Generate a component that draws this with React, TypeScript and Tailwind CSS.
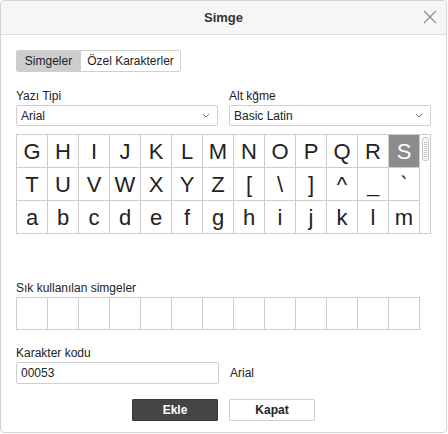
import React, { useState } from 'react';

const ROWS = [
  ['G', 'H', 'I', 'J', 'K', 'L', 'M', 'N', 'O', 'P', 'Q', 'R', 'S'],
  ['T', 'U', 'V', 'W', 'X', 'Y', 'Z', '[', '\\', ']', '^', '_', '`'],
  ['a', 'b', 'c', 'd', 'e', 'f', 'g', 'h', 'i', 'j', 'k', 'l', 'm'],
];

const Chevron = () => (
  <svg width="8" height="5" viewBox="0 0 8 5" className="text-[#777]">
    <path d="M1 1l3 3 3-3" fill="none" stroke="currentColor" strokeWidth="1" />
  </svg>
);

const Select = ({ value }: { value: string }) => (
  <div className="h-[21px] border border-[#cfcfcf] rounded-[2px] flex items-center justify-between pl-[4px] pr-[7px] text-[12px] text-[#222] bg-white">
    <span>{value}</span>
    <Chevron />
  </div>
);

export default function App() {
  const [tab, setTab] = useState(0);
  const [selected, setSelected] = useState('S');

  return (
    <div className="w-[448px] h-[434px] bg-white" style={{ fontFamily: '"Liberation Sans", Arial, sans-serif' }}>
      <div className="w-[447px] h-[433px] border border-[#d4d4d4] rounded-[4px] overflow-hidden flex flex-col">
        {/* header */}
        <div className="h-[34px] shrink-0 bg-[#f6f6f6] border-b border-[#dcdcdc] relative flex items-center justify-center">
          <span className="text-[13px] font-bold text-[#333]">Simge</span>
          <button className="absolute right-[9px] top-[9px] text-[#8a8a8a]">
            <svg width="14" height="14" viewBox="0 0 14 14">
              <path d="M1 1l12 12M13 1L1 13" stroke="currentColor" strokeWidth="1.1" fill="none" />
            </svg>
          </button>
        </div>

        <div className="pl-[15px] pr-[15px] pt-[15px] text-[12px] text-[#222]">
          {/* tabs */}
          <div className="flex w-[165px] h-[22px] border border-[#cfcfcf] rounded-[2px] overflow-hidden">
            <button
              onClick={() => setTab(0)}
              className={`w-[63px] flex items-center justify-center text-[12px] ${tab === 0 ? 'bg-[#cdcdcd]' : 'bg-white'}`}
            >
              Simgeler
            </button>
            <button
              onClick={() => setTab(1)}
              className={`flex-1 flex items-center justify-center text-[12px] border-l border-[#cfcfcf] ${tab === 1 ? 'bg-[#cdcdcd]' : 'bg-white'}`}
            >
              Özel Karakterler
            </button>
          </div>

          {/* selects */}
          <div className="flex gap-[11px] mt-[16px]">
            <div className="w-[203px]">
              <div className="h-[17px] leading-[17px]">Yazı Tipi</div>
              <Select value="Arial" />
            </div>
            <div className="w-[203px]">
              <div className="h-[17px] leading-[17px]">Alt kğme</div>
              <Select value="Basic Latin" />
            </div>
          </div>

          {/* glyph grid */}
          <div className="flex mt-[8px]">
            <div className="grid grid-cols-[repeat(13,31px)] border-l border-t border-[#cccccc] w-[404px]">
              {ROWS.flat().map((c, i) => (
                <div
                  key={i}
                  onClick={() => setSelected(c)}
                  className={`h-[33px] border-r border-b border-[#cccccc] flex items-center justify-center text-[22px] cursor-pointer ${
                    selected === c ? 'bg-[#8c8c8c] text-white' : 'text-[#222]'
                  }`}
                >
                  {c}
                </div>
              ))}
            </div>
            <div className="w-[12px] h-[100px] border border-l-0 border-[#cccccc] relative">
              <div className="absolute left-[2px] top-[2px] w-[7px] h-[24px] border border-[#c4c4c4] rounded-[3px] bg-[#f8f8f8] flex flex-col items-center justify-center gap-[1px]">
                {Array.from({ length: 8 }).map((_, i) => (
                  <div key={i} className="w-[3px] h-px bg-[#c8c8c8]" />
                ))}
              </div>
            </div>
          </div>

          {/* recent */}
          <div className="mt-[46px] h-[17px] leading-[17px]">Sık kullanılan simgeler</div>
          <div className="flex border-l border-t border-b border-[#cccccc] w-[405px] h-[33px]">
            {Array.from({ length: 13 }).map((_, i) => (
              <div key={i} className="w-[31px] border-r border-[#cccccc]" />
            ))}
          </div>

          {/* char code */}
          <div className="mt-[15px] h-[17px] leading-[17px]">Karakter kodu</div>
          <div className="flex items-center gap-[11px]">
            <div className="w-[203px] h-[22px] border border-[#cfcfcf] rounded-[2px] flex items-center pl-[4px]">00053</div>
            <span>Arial</span>
          </div>

          {/* buttons */}
          <div className="flex justify-center gap-[11px] mt-[15px]">
            <button className="w-[86px] h-[22px] bg-[#454545] border border-[#3a3a3a] text-white font-bold text-[12px] rounded-[1px]">
              Ekle
            </button>
            <button className="w-[86px] h-[22px] bg-white border border-[#cfcfcf] text-[#222] font-bold text-[12px] rounded-[1px]">
              Kapat
            </button>
          </div>
        </div>
      </div>
    </div>
  );
}
